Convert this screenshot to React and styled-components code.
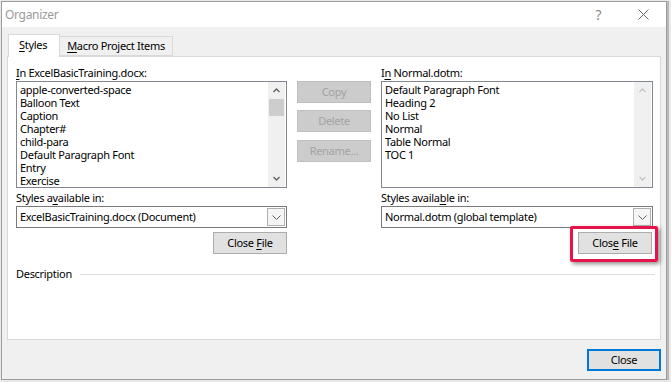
import React from 'react';
import styled, { createGlobalStyle } from 'styled-components';

const GlobalStyle = createGlobalStyle`
  body {
    margin: 0;
    background: #e9e9e9;
    font-family: "Noto Sans", "Open Sans", sans-serif;
    font-size: 11px;
    letter-spacing: -0.3px;
    color: #000;
  }
  u {
    text-decoration: underline;
    text-underline-offset: 2px;
  }
`;

const Dialog = styled.div`
  box-sizing: border-box;
  width: 666px;
  height: 379px;
  margin: 1px 0 0 1px;
  border: 1px solid #9d9d9d;
  background: #f0f0f0;
  display: flex;
  flex-direction: column;
  box-shadow: 2px 0 0 #b8b8b8;
`;

const TitleBar = styled.div`
  height: 25px;
  background: #fff;
  display: flex;
  align-items: center;
  padding-left: 3px;
  color: #9a9a9a;
  font-size: 12px;
`;

const Title = styled.span`
  flex: 1;
`;

const TitleButton = styled.span`
  width: 45px;
  display: flex;
  justify-content: center;
  align-items: center;
  color: #8a8a8a;
  font-size: 14px;
`;

const Body = styled.div`
  flex: 1;
  display: flex;
  flex-direction: column;
  padding: 7px 5px 0 5px;
`;

const TabRow = styled.div`
  display: flex;
  align-items: flex-end;
  margin-left: 1px;
  height: 22px;
  position: relative;
  z-index: 1;
`;

const Tab = styled.div`
  box-sizing: border-box;
  height: ${p => (p.$active ? '23px' : '20px')};
  margin-bottom: ${p => (p.$active ? '-1px' : '0')};
  padding: ${p => (p.$active ? '2px 12px 0 10px' : '1px 7px 0 7px')};
  background: ${p => (p.$active ? '#fff' : '#f0f0f0')};
  border: 1px solid #d9d9d9;
  border-bottom: ${p => (p.$active ? 'none' : '1px solid #d9d9d9')};
  border-left: ${p => (p.$active ? '1px solid #d9d9d9' : 'none')};
  line-height: 16px;
`;

const Panel = styled.div`
  box-sizing: border-box;
  height: 284px;
  background: #fff;
  border: 1px solid #d9d9d9;
  padding: 8px 5px 0 8px;
  display: flex;
  flex-direction: column;
`;

const Columns = styled.div`
  display: grid;
  grid-template-columns: 271px 74px 272px;
  column-gap: 10px;
`;

const Column = styled.div`
  display: flex;
  flex-direction: column;
`;

const Label = styled.div`
  height: 16px;
  line-height: 16px;
  margin-top: ${p => p.$gap || 0}px;
`;

const ListBox = styled.div`
  box-sizing: border-box;
  height: 107px;
  border: 1px solid #828790;
  display: flex;
  background: #fff;
`;

const Items = styled.div`
  flex: 1;
  padding: 1px 0 0 3px;
  overflow: hidden;
`;

const Item = styled.div`
  line-height: 13px;
  height: 13px;
  white-space: nowrap;
`;

const ScrollBar = styled.div`
  width: 17px;
  background: #f0f0f0;
  display: flex;
  flex-direction: column;
  align-items: center;
  margin: 0 1px 0 0;
`;

const ArrowBox = styled.div`
  height: 17px;
  width: 17px;
  display: flex;
  align-items: center;
  justify-content: center;
`;

const Track = styled.div`
  flex: 1;
  width: 100%;
  display: flex;
  flex-direction: column;
`;

const Thumb = styled.div`
  height: 17px;
  margin: 0 1px;
  background: #cdcdcd;
`;

const Combo = styled.div`
  box-sizing: border-box;
  height: 22px;
  border: 1px solid #7a7a7a;
  display: flex;
  align-items: stretch;
  background: #fff;
`;

const ComboText = styled.div`
  flex: 1;
  padding-left: 3px;
  line-height: 20px;
  white-space: nowrap;
`;

const ComboButton = styled.div`
  width: 16px;
  border: 1px solid #b0b0b0;
  margin: 1px;
  display: flex;
  align-items: center;
  justify-content: center;
  background: #f5f5f5;
`;

const ButtonRow = styled.div`
  display: flex;
  justify-content: flex-end;
  margin-top: ${p => p.$gap || 0}px;
  padding-right: ${p => p.$pad || 0}px;
`;

const Button = styled.div`
  box-sizing: border-box;
  width: 74px;
  height: 22px;
  display: flex;
  align-items: center;
  justify-content: center;
  background: ${p => (p.$disabled ? '#cccccc' : '#e1e1e1')};
  color: ${p => (p.$disabled ? '#a3a3a3' : '#000')};
  border: ${p => (p.$default ? '2px solid #0078d7' : `1px solid ${p.$disabled ? '#bfbfbf' : '#adadad'}`)};
  margin-top: ${p => p.$gap || 0}px;
  line-height: 16px;
  white-space: pre;
`;

const Highlight = styled.div`
  position: relative;
  &::after {
    content: '';
    position: absolute;
    left: -8px;
    right: -6px;
    top: -6px;
    bottom: -8px;
    border: 3px solid #e5144a;
    border-radius: 2px;
    box-shadow: 2px 2px 4px rgba(0, 0, 0, 0.45);
    pointer-events: none;
  }
`;

const Description = styled.div`
  display: flex;
  align-items: center;
  margin-top: 12px;
  line-height: 16px;
  &::after {
    content: '';
    flex: 1;
    height: 1px;
    background: #dcdcdc;
    margin-left: 8px;
  }
`;

const Footer = styled.div`
  display: flex;
  justify-content: flex-end;
  margin-top: 9px;
`;

const Chevron = ({ dir = 'down', color = '#606060' }) => (
  <svg width="7" height="5" viewBox="0 0 7 5">
    {dir === 'up' ? (
      <polyline points="0.5,4 3.5,1 6.5,4" fill="none" stroke={color} strokeWidth="1.3" />
    ) : (
      <polyline points="0.5,1 3.5,4 6.5,1" fill="none" stroke={color} strokeWidth="1.3" />
    )}
  </svg>
);

const List = ({ items, disabled }) => {
  const c = disabled ? '#c4c4c4' : '#606060';
  return (
    <ListBox>
      <Items>
        {items.map(i => (
          <Item key={i}>{i}</Item>
        ))}
      </Items>
      <ScrollBar>
        <ArrowBox>
          <Chevron dir="up" color={c} />
        </ArrowBox>
        <Track>{!disabled && <Thumb />}</Track>
        <ArrowBox>
          <Chevron dir="down" color={c} />
        </ArrowBox>
      </ScrollBar>
    </ListBox>
  );
};

const ComboBox = ({ value }) => (
  <Combo>
    <ComboText>{value}</ComboText>
    <ComboButton>
      <svg width="9" height="5" viewBox="0 0 9 5">
        <polyline points="0.5,0.5 4.5,4.5 8.5,0.5" fill="none" stroke="#606060" strokeWidth="1" />
      </svg>
    </ComboButton>
  </Combo>
);

const leftItems = [
  'apple-converted-space',
  'Balloon Text',
  'Caption',
  'Chapter#',
  'child-para',
  'Default Paragraph Font',
  'Entry',
  'Exercise',
];

const rightItems = ['Default Paragraph Font', 'Heading 2', 'No List', 'Normal', 'Table Normal', 'TOC 1'];

const App = () => (
  <>
    <GlobalStyle />
    <Dialog>
      <TitleBar>
        <Title>Organizer</Title>
        <TitleButton>?</TitleButton>
        <TitleButton>
          <svg width="11" height="11" viewBox="0 0 11 11">
            <path d="M0.5 0.5 L10.5 10.5 M10.5 0.5 L0.5 10.5" stroke="#6a6a6a" strokeWidth="1" />
          </svg>
        </TitleButton>
      </TitleBar>
      <Body>
        <TabRow>
          <Tab $active>
            <u>S</u>tyles
          </Tab>
          <Tab>
            <u>M</u>acro Project Items
          </Tab>
        </TabRow>
        <Panel>
          <Columns>
            <Column>
              <Label>
                <u>I</u>n ExcelBasicTraining.docx:
              </Label>
              <List items={leftItems} />
              <Label $gap={2}>
                Styles a<u>v</u>ailable in:
              </Label>
              <ComboBox value="ExcelBasicTraining.docx (Document)" />
              <ButtonRow $gap={4}>
                <Button>
                  <span>
                    Close <u>F</u>ile
                  </span>
                </Button>
              </ButtonRow>
            </Column>
            <Column>
              <Label />
              <Button $disabled>Copy</Button>
              <Button $disabled $gap={7}>
                Delete
              </Button>
              <Button $disabled $gap={8}>
                Rename...
              </Button>
            </Column>
            <Column>
              <Label>
                I<u>n</u> Normal.dotm:
              </Label>
              <List items={rightItems} disabled />
              <Label $gap={2}>
                Styles availa<u>b</u>le in:
              </Label>
              <ComboBox value="Normal.dotm (global template)" />
              <ButtonRow $gap={4} $pad={1}>
                <Highlight>
                  <Button>
                    <span>
                      Clos<u>e</u> File
                    </span>
                  </Button>
                </Highlight>
              </ButtonRow>
            </Column>
          </Columns>
          <Description>Description</Description>
        </Panel>
        <Footer>
          <Button $default>Close</Button>
        </Footer>
      </Body>
    </Dialog>
  </>
);

export default App;
